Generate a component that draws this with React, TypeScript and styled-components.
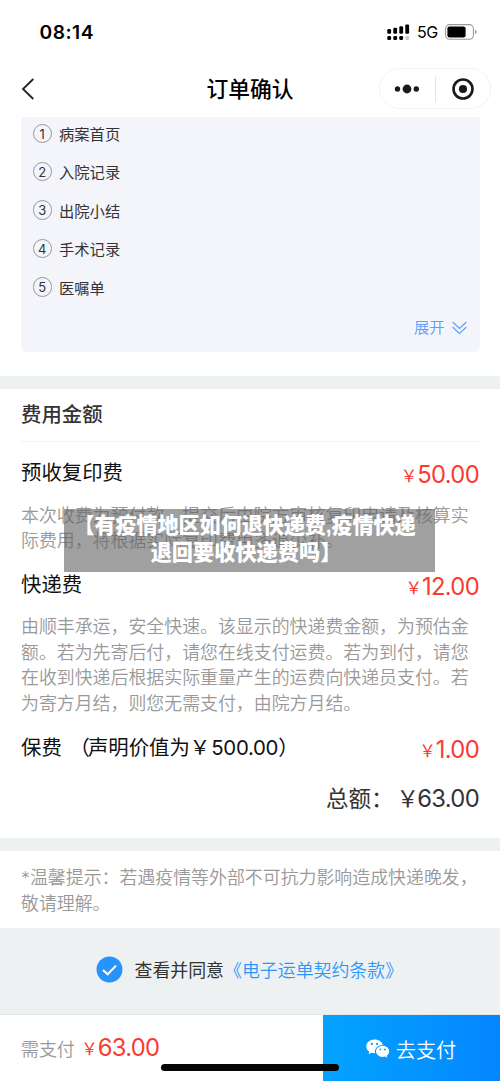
import React from "react";
import styled, { createGlobalStyle } from "styled-components";

const GlobalStyle = createGlobalStyle`
  * { box-sizing: border-box; }
  body {
    margin: 0;
    background: #fff;
    font-family: Inter, "Noto Sans CJK SC", sans-serif;
    color: #111;
  }
`;

const Screen = styled.div`
  position: relative;
  width: 500px;
  height: 1081px;
  overflow: hidden;
  display: flex;
  flex-direction: column;
  background: #fff;
`;

const StatusBar = styled.header`
  height: 64px;
  flex: none;
  display: flex;
  align-items: center;
  justify-content: space-between;
  padding: 0 23px 0 39.5px;
`;

const Clock = styled.span`
  font-size: 19.2px;
  font-weight: 600;
  letter-spacing: 0.5px;
  color: #000;
`;

const StatusIcons = styled.div`
  display: flex;
  align-items: center;
  gap: 7px;
`;

const Network = styled.span`
  font-size: 16px;
  font-weight: 400;
  letter-spacing: -0.3px;
  color: #000;
`;

const NavBar = styled.nav`
  height: 53px;
  flex: none;
  display: grid;
  grid-template-columns: 1fr auto 1fr;
  align-items: start;
  padding: 4px 9px 0 9px;
`;

const BackButton = styled.div`
  display: flex;
  height: 41px;
  align-items: center;
  padding-left: 12px;
`;

const NavTitle = styled.h1`
  margin: 0;
  font-size: 21.8px;
  line-height: 42px;
  font-weight: 500;
  color: #000;
`;

const Capsule = styled.div`
  justify-self: end;
  width: 112px;
  height: 41px;
  border: 1px solid #f3f3f3;
  border-radius: 21px;
  display: flex;
  align-items: center;
`;

const CapsuleHalf = styled.div`
  flex: 1;
  display: flex;
  justify-content: center;
`;

const CapsuleDivider = styled.div`
  width: 1px;
  height: 26px;
  background: #e6e6e6;
`;

const RecordPanel = styled.section`
  flex: none;
  height: 235px;
  margin: 0 20.5px 24px;
  padding: 0 13px 0 12px;
  background: #f4f5fb;
  border-radius: 0 0 6px 6px;
  display: flex;
  flex-direction: column;
`;

const RecordList = styled.ol`
  list-style: none;
  margin: 0;
  padding: 0;
`;

const RecordItem = styled.li`
  height: 38.4px;
  display: flex;
  align-items: flex-start;
  gap: 7px;
  font-size: 15.3px;
  line-height: 36px;
  color: #333;
`;

const RecordNumber = styled.span`
  width: 19.5px;
  height: 19.5px;
  margin-top: 6.5px;
  border: 1px solid #999;
  border-radius: 50%;
  font-size: 13px;
  line-height: 19px;
  text-align: center;
`;

const ExpandLink = styled.a`
  display: flex;
  align-items: center;
  align-self: flex-end;
  gap: 7px;
  margin-top: 7px;
  font-size: 15.3px;
  line-height: 24px;
  font-weight: 350;
  color: #5c9dfb;
`;

const Band = styled.div`
  flex: none;
  height: 13px;
  background: #edf1f2;
`;

const FeeSection = styled.section`
  flex: none;
  height: 449px;
  padding: 0 21px;
`;

const SectionTitle = styled.h2`
  margin: 0 0 14px;
  height: 53px;
  border-bottom: 1px solid #f3f3f3;
  font-size: 20.4px;
  line-height: 51px;
  font-weight: 500;
  color: #333;
`;

const FeeRow = styled.div`
  display: flex;
  justify-content: space-between;
  height: 34px;
  font-size: 20.4px;
  line-height: 33px;
`;

const Label = styled.span`
  white-space: pre;
`;

const OpenParen = styled.span`
  margin: 0 -2px 0 2px;
`;

const LabelDigits = styled.span`
  margin-left: 1px;
  letter-spacing: -0.3px;
`;

const Price = styled.span`
  display: flex;
  align-items: baseline;
  line-height: 38px;
  font-size: 23.8px;
  letter-spacing: -0.7px;
  color: #fb3a30;
`;

const Yen = styled.small`
  font-size: 16.5px;
  letter-spacing: 0;
  transform: translateY(-1px);
`;

const Note = styled.p`
  margin: 0;
  font-size: 17.92px;
  line-height: 25.6px;
  font-weight: 350;
  color: #999;
  white-space: nowrap;
`;

const FeeNote = styled(Note)`
  margin: 12.5px 0 14px;
`;

const TotalRow = styled.div`
  display: flex;
  justify-content: flex-end;
  align-items: baseline;
  margin-top: 15px;
  font-size: 22.5px;
  line-height: 38px;
  color: #333;
`;

const TotalValue = styled.span`
  font-size: 23.8px;
  letter-spacing: -0.7px;
`;

const TotalYen = styled.span`
  margin: 0 -1px 0 3px;
  font-size: 22.5px;
`;

const TipSection = styled.section`
  flex: none;
  height: 77px;
  padding: 14px 21px 0;
`;

const Agreement = styled.section`
  flex: none;
  height: 87px;
  padding: 0 0 4px 95.5px;
  background: #edf1f2;
  border-bottom: 1px solid #e3e5e6;
  display: flex;
  align-items: center;
  font-size: 17.92px;
  color: #333;
`;

const AgreementText = styled.span`
  margin-left: 12px;
`;

const AgreementLink = styled.a`
  font-weight: 350;
  color: #2d96fb;
`;

const Footer = styled.footer`
  flex: 1;
  display: flex;
`;

const Due = styled.div`
  width: 323px;
  padding: 0 0 0 21px;
  display: flex;
  align-items: baseline;
  gap: 6.5px;
  line-height: 66px;
  font-size: 17.92px;
  font-weight: 350;
  color: #999;
`;

const DuePrice = styled(Price)`
  font-weight: 400;
  line-height: 66px;
`;

const PayButton = styled.div`
  flex: 1;
  display: flex;
  align-items: center;
  justify-content: center;
  gap: 6px;
  padding-right: 1px;
  background: linear-gradient(90deg, #03a3ff, #0586ff);
  color: #fff;
  font-size: 20.2px;
  font-weight: 350;
`;

const HomeIndicator = styled.div`
  position: absolute;
  left: 161px;
  top: 1064px;
  width: 178px;
  height: 7px;
  border-radius: 4px;
  background: #050505;
`;

const Caption = styled.div`
  position: absolute;
  left: 64px;
  top: 509px;
  width: 371px;
  height: 63px;
  padding: 4px 7px 0 0;
  background: rgba(96, 96, 96, 0.6);
  color: #fff;
  font-family: "Liberation Sans", "Noto Sans CJK SC", sans-serif;
  font-size: 21.2px;
  font-weight: 900;
  line-height: 26.6px;
  text-align: center;
  white-space: nowrap;
`;

const CaptionLead = styled.span`
  margin-right: 3px;
  letter-spacing: -0.18px;
`;

const records = ["病案首页", "入院记录", "出院小结", "手术记录", "医嘱单"];

const Signal = () => (
  <svg width="23" height="17" viewBox="0 0 23 17">
    <rect x="0.3" y="5" width="3.8" height="4.7" rx="1.2" />
    <rect x="6.3" y="3.8" width="3.8" height="5.9" rx="1.2" />
    <rect x="12.3" y="2.2" width="3.8" height="7.5" rx="1.2" />
    <rect x="18.3" y="0.4" width="3.8" height="9.3" rx="1.2" />
    <rect x="0.3" y="12" width="3.8" height="4" rx="1.2" />
    <rect x="6.3" y="12" width="3.8" height="4" rx="1.2" />
    <rect x="12.3" y="12" width="3.8" height="4" rx="1.2" />
    <rect x="18.3" y="12" width="3.8" height="4" rx="1.2" fill="#ccc" />
  </svg>
);

const Battery = () => (
  <svg width="32" height="16" viewBox="0 0 32 16">
    <rect x="0.6" y="0.6" width="27.8" height="14.6" rx="4" fill="none" stroke="#9a9a9a" strokeWidth="1.1" />
    <rect x="2.4" y="2.4" width="18.2" height="11" rx="2.2" />
    <path d="M30 5.6c2 .8 2 3.9 0 4.7z" fill="#9a9a9a" />
  </svg>
);

const WeChat = () => (
  <svg width="24" height="20" viewBox="0 0 24 20">
    <path
      fill="#fff"
      d="M8.6.5C3.9.5.3 3.6.3 7.4c0 2.2 1.2 4.1 3.1 5.4l-.8 2.5 2.9-1.5c1.2.3 2.2.5 3.5.4-.9-4.7 3.2-8.2 7.9-8.1C16.2 2.9 12.8.5 8.6.5z"
    />
    <path
      fill="#fff"
      d="M23.2 12.3c0-3.1-3-5.5-6.6-5.5S10 9.3 10 12.3s3 5.6 6.6 5.6c.9 0 1.7-.2 2.5-.4l2.3 1.2-.6-2c1.5-1.1 2.4-2.6 2.4-4.4z"
    />
    <g fill="#0898ff">
      <circle cx="5.8" cy="4.9" r="1.1" />
      <circle cx="11.2" cy="4.9" r="1.1" />
      <circle cx="14.3" cy="10.4" r="0.95" />
      <circle cx="18.9" cy="10.4" r="0.95" />
    </g>
  </svg>
);

export default function App() {
  return (
    <Screen>
      <GlobalStyle />
      <StatusBar>
        <Clock>08:14</Clock>
        <StatusIcons>
          <Signal />
          <Network>5G</Network>
          <Battery />
        </StatusIcons>
      </StatusBar>
      <NavBar>
        <BackButton>
          <svg width="14" height="22" viewBox="0 0 14 22" fill="none" stroke="#222" strokeWidth="1.8">
            <path d="M12.3 1 2 11l10.3 10" />
          </svg>
        </BackButton>
        <NavTitle>订单确认</NavTitle>
        <Capsule>
          <CapsuleHalf>
            <svg width="26" height="10" viewBox="0 0 26 10" fill="#1a1a1a">
              <circle cx="3.5" cy="5" r="2.7" />
              <circle cx="13" cy="5" r="4.4" />
              <circle cx="22.3" cy="5" r="2.7" />
            </svg>
          </CapsuleHalf>
          <CapsuleDivider />
          <CapsuleHalf>
            <svg width="22" height="22" viewBox="0 0 22 22">
              <circle cx="11" cy="11" r="9.5" fill="none" stroke="#1a1a1a" strokeWidth="2.6" />
              <circle cx="11" cy="11" r="4.1" fill="#1a1a1a" />
            </svg>
          </CapsuleHalf>
        </Capsule>
      </NavBar>

      <RecordPanel>
        <RecordList>
          {records.map((name, i) => (
            <RecordItem key={name}>
              <RecordNumber>{i + 1}</RecordNumber>
              {name}
            </RecordItem>
          ))}
        </RecordList>
        <ExpandLink>
          展开
          <svg width="15" height="14" viewBox="0 0 15 14" fill="none" stroke="#5c9dfb" strokeWidth="1.1">
            <path d="M.6 1l6.9 6.5L14.4 1M.6 6l6.9 6.5L14.4 6" />
          </svg>
        </ExpandLink>
      </RecordPanel>

      <Band />
      <FeeSection>
        <SectionTitle>费用金额</SectionTitle>
        <FeeRow>
          <Label>预收复印费</Label>
          <Price><Yen>￥</Yen>50.00</Price>
        </FeeRow>
        <FeeNote>
          本次收费为预付款，提交后由院方审核复印申请及核算实
          <br />
          际费用，将根据实际复印费用多退少补。
        </FeeNote>
        <FeeRow>
          <Label>快递费</Label>
          <Price><Yen>￥</Yen>12.00</Price>
        </FeeRow>
        <FeeNote>
          由顺丰承运，安全快速。该显示的快递费金额，为预估金
          <br />
          额。若为先寄后付，请您在线支付运费。若为到付，请您
          <br />
          在收到快递后根据实际重量产生的运费向快递员支付。若
          <br />
          为寄方月结，则您无需支付，由院方月结。
        </FeeNote>
        <FeeRow>
          <Label>保费 <OpenParen>（</OpenParen>声明价值为￥<LabelDigits>500.00</LabelDigits>）</Label>
          <Price><Yen>￥</Yen>1.00</Price>
        </FeeRow>
        <TotalRow>
          总额：<TotalValue><TotalYen>￥</TotalYen>63.00</TotalValue>
        </TotalRow>
      </FeeSection>
      <Band />

      <TipSection>
        <Note>
          *温馨提示：若遇疫情等外部不可抗力影响造成快递晚发，
          <br />
          敬请理解。
        </Note>
      </TipSection>

      <Agreement>
        <svg width="27" height="27" viewBox="0 0 27 27">
          <circle cx="13.5" cy="13.5" r="13" fill="#2794fd" />
          <path d="M7 14l4.6 4.3L20 9.6" fill="none" stroke="#fff" strokeWidth="2" />
        </svg>
        <AgreementText>查看并同意</AgreementText>
        <AgreementLink>《电子运单契约条款》</AgreementLink>
      </Agreement>

      <Footer>
        <Due>
          需支付
          <DuePrice><Yen>￥</Yen>63.00</DuePrice>
        </Due>
        <PayButton>
          <WeChat />
          去支付
        </PayButton>
      </Footer>

      <Caption>
        <CaptionLead>【有疫情地区如何退快递费,疫情快递</CaptionLead>
        <br />
        退回要收快递费吗】
      </Caption>
      <HomeIndicator />
    </Screen>
  );
}
